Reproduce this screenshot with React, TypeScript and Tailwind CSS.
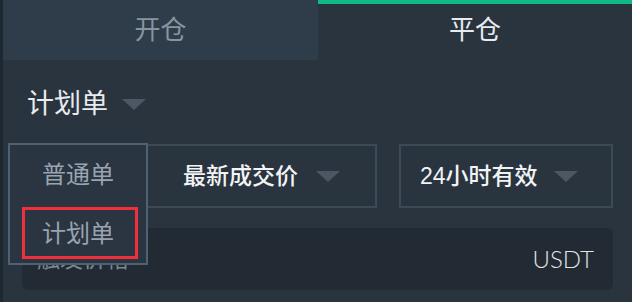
import React from 'react';

const font = { fontFamily: '"Liberation Sans", "Noto Sans CJK SC", sans-serif' };

function Caret({ className }: { className: string }) {
  return (
    <svg className={className} viewBox="0 0 24 11" fill="currentColor">
      <path d="M0 0 L24 0 L12 11 Z" />
    </svg>
  );
}

export default function App() {
  return (
    <div className="flex h-[302px] w-[632px] overflow-hidden bg-[#29343f]" style={font}>
      <div className="w-[3px] bg-[#1e2831]" />
      <div className="relative flex flex-1 flex-col">
        {/* tabs */}
        <div className="flex h-[60px]">
          <div className="flex w-[315px] items-center justify-center bg-[#2f3d4b] text-[26px] leading-none text-[#8894a0]">
            开仓
          </div>
          <div className="flex flex-1 items-center justify-center border-t-4 border-[#12b886] pb-1 text-[26px] leading-none text-[#e8ecef]">
            平仓
          </div>
        </div>

        {/* order type */}
        <div className="mt-[30px] flex h-[28px] items-center gap-[14px] pl-[24px]">
          <span className="text-[27px] leading-[28px] text-[#e8ecef]">计划单</span>
          <Caret className="mt-[1px] h-[11px] w-[24px] text-[#4c5763]" />
        </div>

        {/* selects */}
        <div className="mt-[26px] flex h-[64px] gap-[22px] pl-[19px] pr-[19px]">
          <div className="flex w-[355px] items-center justify-end gap-[18px] border-2 border-[#3c4956] pr-[35px]">
            <span className="text-[23px] font-medium leading-none text-[#f1f3f5]">最新成交价</span>
            <Caret className="h-[11px] w-[24px] text-[#4c5763]" />
          </div>
          <div className="flex flex-1 items-center gap-[16px] border-2 border-[#3c4956] pl-[19px]">
            <span className="text-[23px] font-medium leading-none text-[#f1f3f5]">24小时有效</span>
            <Caret className="h-[11px] w-[24px] text-[#4c5763]" />
          </div>
        </div>

        {/* trigger price input */}
        <div className="mx-[19px] mt-[20px] flex h-[62px] items-center justify-between rounded-md bg-[#222b34] pl-[15px] pr-[19px]">
          <span className="text-[23px] leading-none text-[#7d8893]">触发价格</span>
          <span className="font-['Lato'] text-[24px] font-light leading-none text-[#e2e6ea]">USDT</span>
        </div>

        {/* dropdown menu */}
        <div className="absolute left-[5px] top-[143px] flex h-[122px] w-[140px] flex-col border-2 border-[#4f6275] bg-[#2a3541]">
          <div className="flex flex-1 items-center pl-[32px] text-[24px] leading-none text-[#98a4af]">普通单</div>
          <div className="flex flex-1 items-center pl-[32px] text-[24px] leading-none text-[#98a4af]">计划单</div>
          <div className="absolute left-[12px] top-[62px] h-[52px] w-[116px] border-[3px] border-[#ef2f3b]" />
        </div>
      </div>
    </div>
  );
}
